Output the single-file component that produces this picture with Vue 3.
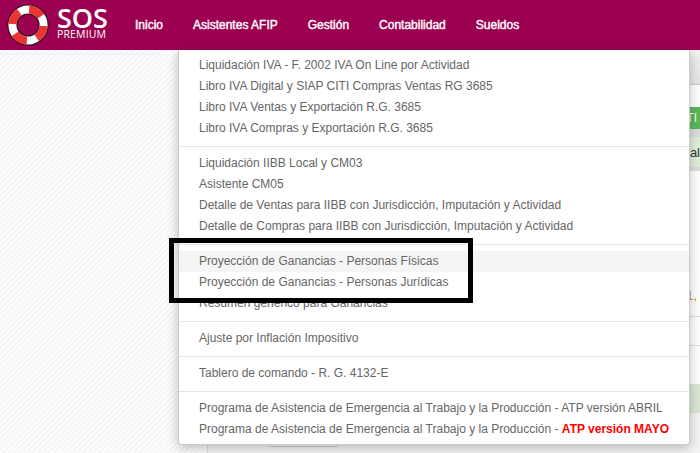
<script setup>
const nav = ['Inicio', 'Asistentes AFIP', 'Gestión', 'Contabilidad', 'Sueldos']
const groups = [
  ['Liquidación IVA - F. 2002 IVA On Line por Actividad', 'Libro IVA Digital y SIAP CITI Compras Ventas RG 3685', 'Libro IVA Ventas y Exportación R.G. 3685', 'Libro IVA Compras y Exportación R.G. 3685'],
  ['Liquidación IIBB Local y CM03', 'Asistente CM05', 'Detalle de Ventas para IIBB con Jurisdicción, Imputación y Actividad', 'Detalle de Compras para IIBB con Jurisdicción, Imputación y Actividad'],
  ['Proyección de Ganancias - Personas Físicas', 'Proyección de Ganancias - Personas Jurídicas', 'Resumen genérico para Ganancias'],
  ['Ajuste por Inflación Impositivo'],
  ['Tablero de comando - R. G. 4132-E'],
  ['Programa de Asistencia de Emergencia al Trabajo y la Producción - ATP versión ABRIL']
]
const hovered = 'Proyección de Ganancias - Personas Físicas'
</script>

<template>
  <div class="page">
    <header class="bar">
      <div class="brand">
        <svg class="buoy" width="42" height="42" viewBox="0 0 42 42">
          <circle cx="21" cy="21" r="15.6" fill="none" stroke="#111" stroke-width="10" />
          <circle cx="21" cy="21" r="15.6" fill="none" stroke="#fff" stroke-width="8" />
          <circle cx="21" cy="21" r="15.6" fill="none" stroke="#ee3333" stroke-width="8" pathLength="360" stroke-dasharray="52 38" transform="rotate(-86 21 21)" />
        </svg>
        <div class="word">
          <div class="sos">SOS</div>
          <div class="premium">PREMIUM</div>
        </div>
      </div>
      <nav class="nav">
        <a v-for="n in nav" :key="n" class="nav-link">{{ n }}</a>
      </nav>
    </header>

    <main class="body">
      <aside class="side"></aside>
      <section class="content">
        <div class="row r-head"></div>
        <div class="row r-white"></div>
        <div class="row r-green"><span>TI</span></div>
        <div class="row r-gap"></div>
        <div class="row r-total"><span>tal</span></div>
        <div class="row r-plain"></div>
        <div class="row r-num"><span>-1,</span></div>
        <div class="row r-plain3"></div>
        <div class="row r-blank"></div>
        <div class="row r-soft"></div>
        <div class="row r-end"><span class="ghost-btn"></span></div>
      </section>
    </main>

    <div class="menu">
      <template v-for="(g, i) in groups" :key="i">
        <div v-if="i" class="divider"></div>
        <a v-for="t in g" :key="t" class="item" :class="{ hover: t === hovered }">{{ t }}</a>
      </template>
      <a class="item">Programa de Asistencia de Emergencia al Trabajo y la Producción - <b class="alert">ATP versión MAYO</b></a>
    </div>

    <div class="mark"></div>
  </div>
</template>

<style>
html, body { margin: 0; background: #fff; }
</style>

<style scoped>
.page {
  position: relative;
  width: 700px;
  height: 453px;
  overflow: hidden;
  font-family: "Liberation Sans", Arial, sans-serif;
  display: flex;
  flex-direction: column;
}
.bar {
  height: 50px;
  flex: none;
  background: #9c0050;
  display: flex;
  align-items: center;
  color: #fff;
}
.brand {
  display: flex;
  align-items: center;
  width: 135px;
  padding-left: 7px;
  box-sizing: border-box;
  flex: none;
}
.buoy { flex: none; }
.word { margin: -3px 0 0 8px; display: flex; flex-direction: column; }
.sos {
  font-family: "Open Sans", sans-serif;
  font-weight: 600;
  font-size: 27px;
  line-height: 22px;
}
.premium {
  font-family: "Open Sans", sans-serif;
  font-weight: 400;
  font-size: 10.5px;
  line-height: 11px;
  letter-spacing: 0.15px;
}
.nav { display: flex; gap: 30px; }
.nav-link { font-size: 12px; white-space: nowrap; -webkit-text-stroke: 0.4px #fff; }
.body { flex: 1; display: flex; min-height: 0; }
.side {
  width: 208px;
  flex: none;
  background: repeating-linear-gradient(135deg, #fdfdfd 0 2px, #f6f6f6 2px 4px);
  border-right: 1px solid #ddd;
  box-sizing: border-box;
}
.content { flex: 1; display: flex; flex-direction: column; font-size: 13px; }
.row { display: flex; align-items: center; justify-content: flex-end; flex: none; box-sizing: border-box; }
.r-head { height: 35px; background: linear-gradient(#f2f2f2, #e6e6e6); border-bottom: 1px solid #ccc; }
.r-white { height: 22px; background: #fff; }
.r-green { height: 22px; background: #5cb85c; color: #fff; padding-right: 3px; font-size: 12px; }
.r-gap { height: 8px; background: #ddd; }
.r-total { height: 34px; background: #dff0d8; color: #333; border-bottom: 4px solid #ddd; }
.r-plain { height: 103px; background: #fff; }
.r-num { height: 43px; color: #e08a00; padding-right: 3px; border-bottom: 1px solid #ddd; }
.r-plain3 { height: 29px; background: #fff; border-bottom: 1px solid #ddd; }
.r-blank { height: 38px; background: #fff; }
.r-soft { height: 29px; background: #dbe8d2; }
.r-end { height: 40px; background: #f4f4f4; justify-content: flex-start; align-items: flex-start; }
.ghost-btn { margin: 27px 0 0 60px; width: 68px; height: 5px; background: #fff; border: 1px solid #ccc; border-radius: 3px; }
.menu {
  position: absolute;
  left: 178px;
  top: 50px;
  width: 512px;
  height: 395px;
  box-sizing: border-box;
  padding-top: 5px;
  background: #fff;
  border: 1px solid #ccc;
  border-top: 0;
  border-radius: 0 0 4px 4px;
  box-shadow: 0 3px 12px rgba(0, 0, 0, 0.25);
  font-size: 12px;
  color: #666;
}
.item {
  display: block;
  height: 21px;
  line-height: 21px;
  padding-left: 20px;
  white-space: nowrap;
}
.hover { background: #f5f5f5; }
.divider { height: 1px; background: #e5e5e5; margin: 7px 0 6px; }
.alert { color: #f00; }
.mark {
  position: absolute;
  left: 169px;
  top: 238px;
  width: 304px;
  height: 65px;
  box-sizing: border-box;
  border: 5px solid #000;
}
</style>
